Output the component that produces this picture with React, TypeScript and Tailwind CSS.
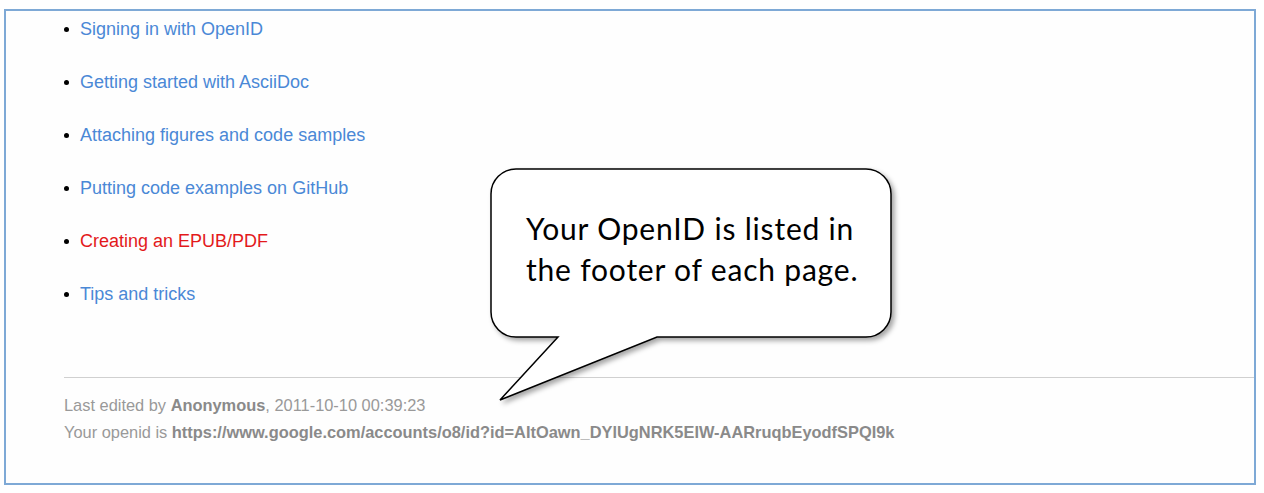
const topics = [
  { label: "Signing in with OpenID", missing: false },
  { label: "Getting started with AsciiDoc", missing: false },
  { label: "Attaching figures and code samples", missing: false },
  { label: "Putting code examples on GitHub", missing: false },
  { label: "Creating an EPUB/PDF", missing: true },
  { label: "Tips and tricks", missing: false },
];

function Callout() {
  return (
    <div className="absolute left-[480px] top-[160px] h-[260px] w-[430px]">
      <svg width="430" height="260" viewBox="0 0 430 260" className="absolute inset-0">
        <defs>
          <filter id="shade" x="-10%" y="-10%" width="130%" height="130%">
            <feDropShadow dx="3" dy="3" stdDeviation="2.5" floodColor="#000" floodOpacity="0.35" />
          </filter>
        </defs>
        <path
          d="M 36 9 H 386 A 25 25 0 0 1 411 34 V 152 A 25 25 0 0 1 386 177 H 177 L 20 240 L 78 177 H 36 A 25 25 0 0 1 11 152 V 34 A 25 25 0 0 1 36 9 Z"
          fill="#fff"
          stroke="#000"
          strokeWidth="1.5"
          strokeLinejoin="miter"
          filter="url(#shade)"
        />
      </svg>
      <div className="absolute left-[46px] top-[48px] font-['Lato',sans-serif] text-[30px] leading-[41px] tracking-[0.8px] text-black">
        <div>Your OpenID is listed in</div>
        <div>the footer of each page.</div>
      </div>
    </div>
  );
}

export default function App() {
  return (
    <div className="relative h-[493px] w-[1264px] overflow-hidden bg-white font-['Liberation_Sans',Arial,sans-serif]">
      <div className="ml-[4px] mt-[9px] flex h-[476px] w-[1252px] flex-col border-2 border-[#7ea9d6] bg-[#fefefe]">
        {/* Topic links */}
        <ul className="flex flex-col gap-[33px] pl-[58px] pt-[8px]">
          {topics.map((t) => (
            <li key={t.label} className="flex items-center gap-[11px] text-[18px] leading-[20px]">
              <span className="h-[5px] w-[5px] rounded-full bg-black" />
              <span className={t.missing ? "text-[#e3191b]" : "text-[#4a88d6]"}>{t.label}</span>
            </li>
          ))}
        </ul>

        {/* Footer */}
        <div className="ml-[58px] mt-[73px] border-t border-[#d0d0d0] pt-[14px] text-[16.4px] leading-[27px] text-[#999]">
          <div>
            Last edited by <b className="font-bold text-[#8a8a8a]">Anonymous</b>, 2011-10-10 00:39:23
          </div>
          <div>
            Your openid is{" "}
            <b className="font-bold text-[#8a8a8a]">
              https://www.google.com/accounts/o8/id?id=AItOawn_DYlUgNRK5EIW-AARruqbEyodfSPQI9k
            </b>
          </div>
        </div>
      </div>
      <Callout />
    </div>
  );
}
